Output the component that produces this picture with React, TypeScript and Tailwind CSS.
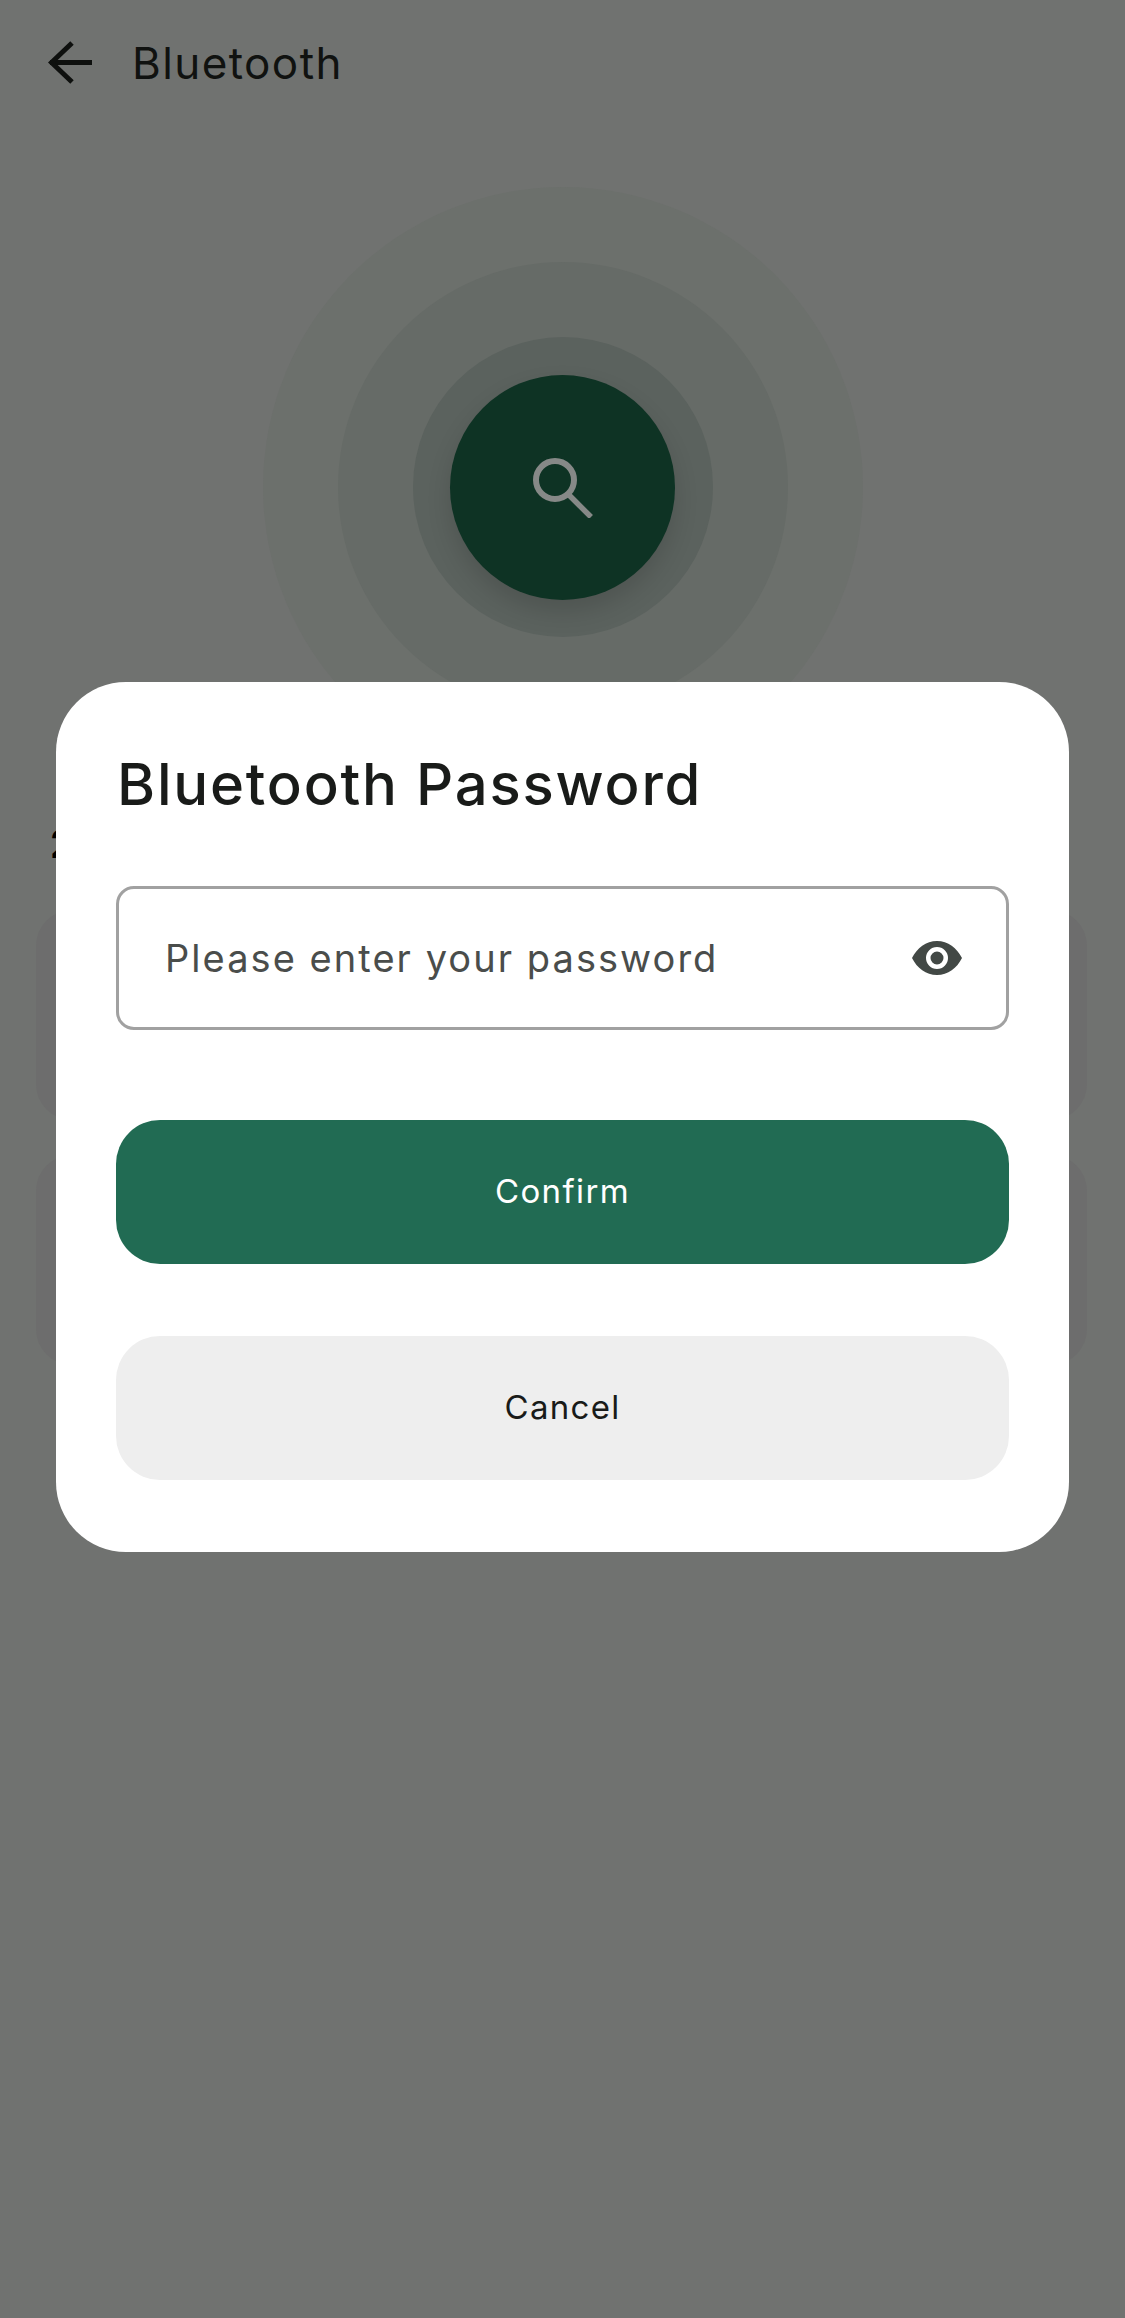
const sans = "font-['Inter','Noto_Sans',sans-serif]";

function BackArrow() {
  return (
    <svg width="46" height="44" viewBox="0 0 46 44" fill="none" stroke="#0e100e" strokeWidth="5">
      <path d="M2 21.500H44" />
      <path d="M24 2L3.500 21.500L24 41" />
    </svg>
  );
}

function SearchIcon() {
  return (
    <svg className="mt-[2px]" width="60" height="60" viewBox="0 0 60 60" fill="none" stroke="#868987" strokeWidth="6">
      <circle cx="22" cy="22" r="19" />
      <path d="M35 36L58 59" strokeWidth="5.500" />
    </svg>
  );
}

function EyeIcon() {
  return (
    <svg width="50" height="34" viewBox="0 0 50 34">
      <path
        fill="#424845"
        fillRule="evenodd"
        d="M25 0C14 0 5 7 0 17c5 10 14 17 25 17s20-7 25-17C45 7 36 0 25 0zm0 28a11 11 0 1 1 0-22 11 11 0 0 1 0 22zm0-4.500a6.500 6.500 0 1 0 0-13 6.500 6.500 0 0 0 0 13z"
      />
    </svg>
  );
}

function DialogButton({ label, className }: { label: string; className: string }) {
  return (
    <button className={`h-[144px] w-full rounded-[44px] text-[33px] ${className}`}>{label}</button>
  );
}

export default function App() {
  return (
    <div className={`relative h-[2318px] w-[1125px] overflow-hidden bg-[#707270] ${sans}`}>
      {/* page behind the dialog */}
      <div className="flex h-[125px] items-center gap-[38px] pl-[48px]">
        <BackArrow />
        <span className="text-[44px] tracking-[1.4px] text-[#101210]">Bluetooth</span>
      </div>

      <div className="mt-[62px] flex justify-center">
        <div className="flex h-[600px] w-[600px] items-center justify-center rounded-full bg-[#6c706c]">
          <div className="flex h-[450px] w-[450px] items-center justify-center rounded-full bg-[#666b67]">
            <div className="flex h-[300px] w-[300px] items-center justify-center rounded-full bg-[#5b625e]">
              <div className="flex h-[225px] w-[225px] items-center justify-center rounded-full bg-[#0e3324] shadow-[0_12px_24px_rgba(0,0,0,0.14)]">
                <SearchIcon />
              </div>
            </div>
          </div>
        </div>
      </div>

      <div className="mt-[33px] pl-[50px] text-[40px] font-bold leading-[48px] text-black">2</div>

      <div className="mt-[42px] flex flex-col gap-[35px] pl-[36px] pr-[38px]">
        <div className="h-[210px] rounded-[36px] bg-[#6d6d6d]" />
        <div className="h-[210px] rounded-[36px] bg-[#6d6d6d]" />
      </div>

      {/* password dialog */}
      <div className="absolute inset-0 flex justify-center pt-[682px]">
        <div className="flex h-[870px] w-[1013px] flex-col rounded-[70px] bg-white px-[60px]">
          <h1 className="mt-[68px] pl-[1px] text-[58px] font-[450] leading-[68px] tracking-[1.8px] text-[#191b19]">
            Bluetooth Password
          </h1>
          <div className="mt-[68px] flex h-[144px] items-center justify-between rounded-[18px] border-[3px] border-[#a1a1a1] pl-[46px] pr-[44px]">
            <span className="text-[38px] tracking-[2.05px] text-[#4a4d4b]">Please enter your password</span>
            <EyeIcon />
          </div>
          <DialogButton label="Confirm" className="mt-[90px] bg-[#216b53] tracking-[1.4px] text-white" />
          <DialogButton label="Cancel" className="mt-[72px] bg-[#eeeeee] tracking-[1.3px] text-[#191b19]" />
        </div>
      </div>
    </div>
  );
}
